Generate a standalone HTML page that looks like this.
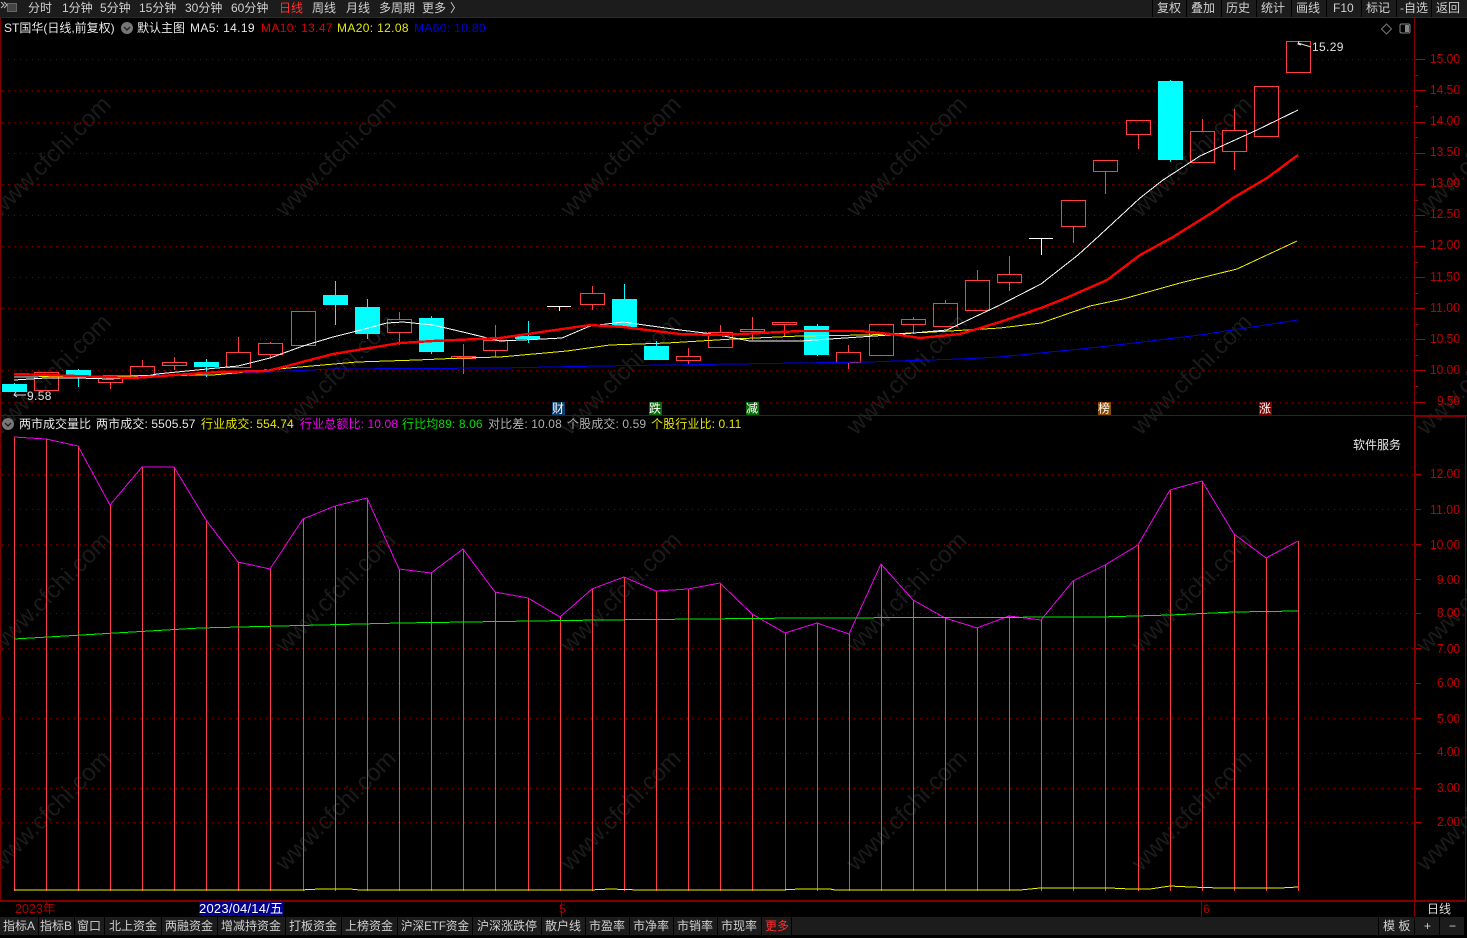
<!DOCTYPE html>
<html><head><meta charset="utf-8"><style>
html,body{margin:0;padding:0;background:#000;overflow:hidden;width:1467px;height:938px}
svg{display:block}
text{font-family:"Liberation Sans","Noto Sans CJK SC",sans-serif;font-size:12px;white-space:pre}
.m text{fill:#d0d0d0}
.ax text{fill:#c00000;font-size:13px}
.wm text{fill:#1b1b1b;font-size:24px}
.ls{letter-spacing:.35px}
.ls2{letter-spacing:.12px}
.r{fill:none;stroke:#ff4040;stroke-width:1;shape-rendering:crispEdges}
.c{fill:#00ffff;shape-rendering:crispEdges}
.w{stroke:#00ffff;stroke-width:1;shape-rendering:crispEdges}
polyline{shape-rendering:crispEdges}
</style></head><body>
<svg width="1467" height="938" viewBox="0 0 1467 938" xmlns="http://www.w3.org/2000/svg">
<rect width="1467" height="938" fill="#000"/>
<!-- watermark -->
<g class="wm">
<text transform="translate(0,218) rotate(-45)">www.cfchi.com</text>
<text transform="translate(285,218) rotate(-45)">www.cfchi.com</text>
<text transform="translate(570,218) rotate(-45)">www.cfchi.com</text>
<text transform="translate(856,218) rotate(-45)">www.cfchi.com</text>
<text transform="translate(1141,218) rotate(-45)">www.cfchi.com</text>
<text transform="translate(1426,218) rotate(-45)">www.cfchi.com</text>
<text transform="translate(0,436) rotate(-45)">www.cfchi.com</text>
<text transform="translate(285,436) rotate(-45)">www.cfchi.com</text>
<text transform="translate(570,436) rotate(-45)">www.cfchi.com</text>
<text transform="translate(856,436) rotate(-45)">www.cfchi.com</text>
<text transform="translate(1141,436) rotate(-45)">www.cfchi.com</text>
<text transform="translate(1426,436) rotate(-45)">www.cfchi.com</text>
<text transform="translate(0,654) rotate(-45)">www.cfchi.com</text>
<text transform="translate(285,654) rotate(-45)">www.cfchi.com</text>
<text transform="translate(570,654) rotate(-45)">www.cfchi.com</text>
<text transform="translate(856,654) rotate(-45)">www.cfchi.com</text>
<text transform="translate(1141,654) rotate(-45)">www.cfchi.com</text>
<text transform="translate(1426,654) rotate(-45)">www.cfchi.com</text>
<text transform="translate(0,872) rotate(-45)">www.cfchi.com</text>
<text transform="translate(285,872) rotate(-45)">www.cfchi.com</text>
<text transform="translate(570,872) rotate(-45)">www.cfchi.com</text>
<text transform="translate(856,872) rotate(-45)">www.cfchi.com</text>
<text transform="translate(1141,872) rotate(-45)">www.cfchi.com</text>
<text transform="translate(1426,872) rotate(-45)">www.cfchi.com</text>
</g>
<!-- grid upper -->
<g stroke="#800000" stroke-width="1" stroke-dasharray="1 5" shape-rendering="crispEdges" fill="none">
<path d="M2 59.5H1415M2 90.5H1415M2 122.5H1415M2 153.5H1415M2 184.5H1415M2 215.5H1415M2 246.5H1415M2 277.5H1415M2 308.5H1415M2 339.5H1415M2 370.5H1415M2 402.5H1415"/>
<path d="M2 474.5H1415M2 509.5H1415M2 544.5H1415M2 579.5H1415M2 613.5H1415M2 648.5H1415M2 683.5H1415M2 718.5H1415M2 753.5H1415M2 788.5H1415M2 822.5H1415"/>
</g>
<!-- top toolbar -->
<rect x="0" y="0" width="1467" height="17" fill="#1c1c1c"/>
<rect x="0" y="17" width="1467" height="1" fill="#2a2a2a"/>
<g fill="#000" shape-rendering="crispEdges">
<rect x="1152" y="0" width="1" height="17"/><rect x="1186" y="0" width="1" height="17"/><rect x="1221" y="0" width="1" height="17"/><rect x="1256" y="0" width="1" height="17"/><rect x="1291" y="0" width="1" height="17"/><rect x="1326" y="0" width="1" height="17"/><rect x="1361" y="0" width="1" height="17"/><rect x="1396" y="0" width="1" height="17"/><rect x="1431" y="0" width="1" height="17"/>
</g>
<rect x="7.5" y="3.5" width="9" height="8" fill="#444" stroke="#666"/>
<path d="M1 2l3 3-3 3M4 2l3 3-3 3" stroke="#bbb" fill="none"/>
<g class="m">
<text x="28" y="12">分时</text><text x="62" y="12">1分钟</text><text x="100" y="12">5分钟</text><text x="139" y="12">15分钟</text><text x="185" y="12">30分钟</text><text x="231" y="12">60分钟</text>
<text x="279" y="12" style="fill:#ff3030">日线</text><text x="312" y="12">周线</text><text x="346" y="12">月线</text><text x="379" y="12">多周期</text><text x="422" y="12">更多</text><text x="450" y="12">〉</text>
<text x="1157" y="12">复权</text><text x="1191" y="12">叠加</text><text x="1226" y="12">历史</text><text x="1261" y="12">统计</text><text x="1296" y="12">画线</text><text x="1333" y="12">F10</text><text x="1366" y="12">标记</text><text x="1400" y="12">-自选</text><text x="1436" y="12">返回</text>
</g>
<!-- info upper -->
<text x="4" y="32" fill="#e8e8e8">ST国华(日线,前复权)</text>
<circle cx="127" cy="28" r="6" fill="#777"/><path d="M124 27l3 3 3-3" stroke="#222" stroke-width="1.4" fill="none"/>
<text x="137" y="32" fill="#e8e8e8">默认主图</text>
<text class="ls" x="190" y="32" fill="#e8e8e8">MA5: 14.19</text>
<text class="ls" x="261" y="32" fill="#e00000">MA10: 13.47</text>
<text class="ls" x="337" y="32" fill="#e8e800">MA20: 12.08</text>
<text class="ls" x="414" y="32" fill="#0000e0">MA60: 10.80</text>
<path d="M1386.5 24l5 5-5 5-5-5z" fill="none" stroke="#777"/>
<rect x="1400" y="24" width="10" height="9" rx="1.5" fill="none" stroke="#888"/><rect x="1405" y="25" width="4" height="7" fill="#888"/>
<!-- candles -->
<g class="r">
<path d="M34.5 372.5h24v18h-24zM98.5 377.5h24v5h-24zM110.5 383v6M130.5 366.5h24v9h-24zM142.5 360v6M162.5 362.5h24v3h-24zM174.5 357v5M174.5 366v4M226.5 352.5h24v15h-24zM238.5 337v15M258.5 343.5h24v11h-24zM270.5 342v1M270.5 355v3M291.5 311.5h24v34h-24zM387.5 319.5h24v13h-24zM399.5 312v7M399.5 333v12M451.5 356.5h24v2h-24zM463.5 344v12M463.5 359v15"/>
<path d="M483.5 340.5h24v10h-24zM495.5 325v15M495.5 351v6M580.5 293.5h24v11h-24zM592.5 286v7M592.5 305v5M676.5 356.5h24v4h-24zM688.5 348v8M688.5 361v3M708.5 332.5h24v15h-24zM720.5 325v7M740.5 329.5h24v2h-24zM752.5 317v12M752.5 332v8M772.5 322.5h24v2h-24zM784.5 325v12M836.5 352.5h24v10h-24zM848.5 345v7M848.5 363v6M869.5 324.5h24v31h-24zM901.5 319.5h24v5h-24zM913.5 317v2M913.5 325v9M933.5 303.5h24v23h-24zM945.5 300v3"/>
<path d="M965.5 280.5h24v30h-24zM977.5 270v10M997.5 274.5h24v8h-24zM1009.5 256v18M1009.5 283v8M1061.5 200.5h24v26h-24zM1073.5 227v16M1093.5 160.5h24v11h-24zM1105.5 172v22M1126.5 120.5h24v14h-24zM1138.5 135v14M1190.5 131.5h24v31h-24zM1202.5 119v12M1222.5 130.5h24v21h-24zM1234.5 109v21M1234.5 152v18M1254.5 86.5h24v50h-24zM1286.5 41.5h24v31h-24z"/>
</g>
<path d="M547 306.5h24M559.5 307v4M1029 238.5h24M1041.5 239v16" stroke="#fff" shape-rendering="crispEdges" fill="none"/>
<g>
<path class="w" d="M14.5 383v2M78.5 369v18M206.5 359v18M335.5 281v44M367.5 299v40M431.5 316v38M528.5 321v22M624.5 284v44M656.5 341v5M817.5 324v32M1170.5 80v82"/>
<rect class="c" x="2" y="384" width="25" height="8"/><rect class="c" x="66" y="370" width="25" height="6"/><rect class="c" x="194" y="362" width="25" height="5"/><rect class="c" x="323" y="295" width="25" height="10"/><rect class="c" x="355" y="307" width="25" height="27"/><rect class="c" x="419" y="318" width="25" height="34"/><rect class="c" x="515" y="336" width="25" height="3"/><rect class="c" x="612" y="299" width="25" height="28"/><rect class="c" x="644" y="346" width="25" height="14"/><rect class="c" x="804" y="326" width="25" height="29"/><rect class="c" x="1158" y="81" width="25" height="79"/>
</g>
<!-- MAs -->
<polyline fill="none" stroke="#0000f0" stroke-width="1" points="14,376 133,376 267,372 333,369 500,368 600,366 733,364 800,363 867,362 960,359 1000,357 1100,347 1200,335 1298,320"/>
<polyline fill="none" stroke="#f0f000" stroke-width="1" points="14,377 213,375 267,370 300,367 357,362 417,360 463,358 500,357 567,351 610,345 667,343 733,339 800,336 867,335 933,332 1000,328 1041,323 1090,306 1123,299 1180,283 1237,269 1297,241"/>
<polyline fill="none" stroke="#ffffff" stroke-width="1" points="14,380 46,378 78,378 110,379 142,377 157,374 207,369 238,366 270,358 303,346 333,337 353,332 387,323 403,322 433,325 467,333 500,341 543,339 562,338 590,326 623,322 680,330 713,334 750,341 800,341 860,337 903,334 947,330 1000,305 1041,284 1078,255 1100,235 1140,198 1163,180 1200,156 1213,150 1257,130 1298,110"/>
<polyline fill="none" stroke="#ff0000" stroke-width="2.4" points="14,374 47,375 133,378 217,372 267,371 283,367 333,354 400,343 433,341 500,338 590,325 623,327 680,334 720,335 760,333 800,331 860,331 900,335 920,338 960,334 1000,322 1041,308 1066,298 1107,280 1140,255 1173,237 1213,212 1233,198 1267,178 1298,155"/>
<!-- low/high annotations -->
<path d="M16 392l-2 3 3 2M14 395h12" stroke="#ddd" fill="none"/>
<text class="ls" x="27" y="400" fill="#e0e0e0">9.58</text>
<path d="M1299 41l-1 3 3 1M1298 43l13 4" stroke="#ddd" fill="none"/>
<text class="ls" x="1312" y="51" fill="#e0e0e0">15.29</text>
<!-- marks -->
<g>
<rect x="552" y="402" width="13" height="13" fill="#0c3d6e"/><text x="552" y="412.5" fill="#fff">财</text>
<rect x="649" y="402" width="13" height="13" fill="#0a6a0a"/><text x="649" y="412.5" fill="#fff">跌</text>
<rect x="746" y="402" width="13" height="13" fill="#0a6a0a"/><text x="746" y="412.5" fill="#fff">减</text>
<rect x="1098" y="402" width="13" height="13" fill="#8a4a00"/><text x="1098" y="412.5" fill="#fff">榜</text>
<rect x="1259" y="402" width="13" height="13" fill="#7a0000"/><text x="1259" y="412.5" fill="#fff">涨</text>
</g>
<!-- lower info -->
<circle cx="8" cy="424" r="6" fill="#777"/><path d="M5 423l3 3 3-3" stroke="#222" stroke-width="1.4" fill="none"/>
<text x="19" y="428" fill="#e8e8e8">两市成交量比</text>
<text class="ls2" x="96" y="428" fill="#e8e8e8">两市成交: 5505.57</text>
<text class="ls2" x="201" y="428" fill="#e8e800">行业成交: 554.74</text>
<text class="ls2" x="300" y="428" fill="#f000f0">行业总额比: 10.08</text>
<text class="ls2" x="402" y="428" fill="#00e000">行比均89: 8.06</text>
<text class="ls2" x="488" y="428" fill="#b0b0b0">对比差: 10.08</text>
<text class="ls2" x="567" y="428" fill="#b0b0b0">个股成交: 0.59</text>
<text class="ls2" x="651" y="428" fill="#e8e800">个股行业比: 0.11</text>
<text x="1353" y="449" fill="#e8e8e8">软件服务</text>
<!-- lower bars -->
<path fill="none" stroke="#ff4040" stroke-width="1" shape-rendering="crispEdges" d="M14.5 437V891M46.5 439V891M78.5 446V891M110.5 505V891M142.5 467V891M174.5 467V891M206.5 520V891M238.5 562V891M270.5 569V891M303.5 519V891M335.5 506V891M367.5 498V891M399.5 569V891M431.5 573V891M463.5 549V891M495.5 592V891M528.5 598V891M560.5 617V891M592.5 589V891M624.5 577V891M656.5 591V891M688.5 589V891M720.5 583V891M752.5 614V891M785.5 633V891M817.5 623V891M849.5 634V891M881.5 564V891M913.5 600V891M945.5 618V891M977.5 628V891M1009.5 616V891M1041.5 620V891M1073.5 581V891M1105.5 565V891M1138.5 545V891M1170.5 490V891M1202.5 481V891M1234.5 534V891M1266.5 558V891M1298.5 541V891"/>
<polyline fill="none" stroke="#f000f0" stroke-width="1" points="14,437 46,439 78,446 110,505 142,467 174,467 206,520 238,562 270,569 303,519 335,506 367,498 399,569 431,573 463,549 495,592 528,598 560,617 592,589 624,577 656,591 688,589 720,583 752,614 785,633 817,623 849,634 881,564 913,600 945,618 977,628 1009,616 1041,620 1073,581 1105,565 1138,545 1170,490 1202,481 1234,534 1266,558 1298,541"/>
<polyline fill="none" stroke="#00f000" stroke-width="1" points="14,639 200,628 400,623 600,620 800,618 1100,617 1170,615 1234,612 1298,611"/>
<polyline fill="none" stroke="#f0f000" stroke-width="1" points="14,890 300,890 320,889 350,889 360,890 590,890 610,889 640,890 780,890 800,889 830,889 835,890 1020,890 1040,888 1110,888 1130,889 1150,889 1170,886 1190,887 1220,888 1280,888 1298,887"/>
<!-- frame -->
<g fill="#800000" shape-rendering="crispEdges">
<rect x="0" y="18" width="1" height="883"/>
<rect x="0" y="415" width="1467" height="1"/>
<rect x="0" y="900" width="1415" height="2"/>
<rect x="1414" y="18" width="1" height="899"/>
<rect x="1415" y="416" width="1" height="485"/>
<rect x="1415" y="900" width="51" height="2"/>
<rect x="1465" y="416" width="1" height="485"/>
<rect x="1415" y="415" width="51" height="2"/>
<rect x="561" y="902" width="1" height="15"/>
<rect x="1201" y="902" width="1" height="15"/>
</g>
<!-- axis ticks -->
<path stroke="#b00000" fill="none" shape-rendering="crispEdges" d="M1415 59.5h10M1415 75.5h3M1415 90.5h10M1415 106.5h3M1415 122.5h10M1415 137.5h3M1415 153.5h10M1415 169.5h3M1415 184.5h10M1415 200.5h3M1415 215.5h10M1415 231.5h3M1415 246.5h10M1415 262.5h3M1415 277.5h10M1415 293.5h3M1415 308.5h10M1415 324.5h3M1415 339.5h10M1415 355.5h3M1415 370.5h10M1415 386.5h3M1415 402.5h10M1416 474.5h5M1416 509.5h5M1416 544.5h5M1416 579.5h5M1416 613.5h5M1416 648.5h5M1416 683.5h5M1416 718.5h5M1416 753.5h5M1416 788.5h5M1416 822.5h5"/>
<g class="ax">
<text x="1430" y="63" textLength="30" lengthAdjust="spacingAndGlyphs">15.00</text><text x="1430" y="94" textLength="30" lengthAdjust="spacingAndGlyphs">14.50</text><text x="1430" y="125" textLength="30" lengthAdjust="spacingAndGlyphs">14.00</text><text x="1430" y="156" textLength="30" lengthAdjust="spacingAndGlyphs">13.50</text><text x="1430" y="187" textLength="30" lengthAdjust="spacingAndGlyphs">13.00</text><text x="1430" y="218" textLength="30" lengthAdjust="spacingAndGlyphs">12.50</text><text x="1430" y="249" textLength="30" lengthAdjust="spacingAndGlyphs">12.00</text><text x="1430" y="281" textLength="30" lengthAdjust="spacingAndGlyphs">11.50</text><text x="1430" y="312" textLength="30" lengthAdjust="spacingAndGlyphs">11.00</text><text x="1430" y="343" textLength="30" lengthAdjust="spacingAndGlyphs">10.50</text><text x="1430" y="374" textLength="30" lengthAdjust="spacingAndGlyphs">10.00</text><text x="1437" y="405" textLength="23" lengthAdjust="spacingAndGlyphs">9.50</text>
<text x="1430" y="478" textLength="30" lengthAdjust="spacingAndGlyphs">12.00</text><text x="1430" y="514" textLength="30" lengthAdjust="spacingAndGlyphs">11.00</text><text x="1430" y="549" textLength="30" lengthAdjust="spacingAndGlyphs">10.00</text><text x="1437" y="584" textLength="23" lengthAdjust="spacingAndGlyphs">9.00</text><text x="1437" y="617" textLength="23" lengthAdjust="spacingAndGlyphs">8.00</text><text x="1437" y="653" textLength="23" lengthAdjust="spacingAndGlyphs">7.00</text><text x="1437" y="687" textLength="23" lengthAdjust="spacingAndGlyphs">6.00</text><text x="1437" y="723" textLength="23" lengthAdjust="spacingAndGlyphs">5.00</text><text x="1437" y="756" textLength="23" lengthAdjust="spacingAndGlyphs">4.00</text><text x="1437" y="792" textLength="23" lengthAdjust="spacingAndGlyphs">3.00</text><text x="1437" y="826" textLength="23" lengthAdjust="spacingAndGlyphs">2.00</text>
</g>
<!-- date row -->
<text x="15" y="913" fill="#b00000" style="font-size:12.5px">2023年</text>
<rect x="199" y="902" width="84" height="14" fill="#00008b"/>
<text x="199" y="913" fill="#fff" style="font-size:13px" textLength="84" lengthAdjust="spacing">2023/04/14/五</text>
<text x="559" y="913" fill="#b00000">5</text>
<text x="1203" y="913" fill="#b00000">6</text>
<text x="1427" y="913" fill="#dcdcdc">日线</text>
<!-- bottom toolbar -->
<rect x="0" y="917" width="1467" height="19" fill="#1c1c1c"/>
<g fill="#000" shape-rendering="crispEdges">
<rect x="38" y="917" width="1" height="19"/><rect x="74" y="917" width="1" height="19"/><rect x="104" y="917" width="1" height="19"/><rect x="161" y="917" width="1" height="19"/><rect x="217" y="917" width="1" height="19"/><rect x="285" y="917" width="1" height="19"/><rect x="341" y="917" width="1" height="19"/><rect x="397" y="917" width="1" height="19"/><rect x="472" y="917" width="1" height="19"/><rect x="541" y="917" width="1" height="19"/><rect x="585" y="917" width="1" height="19"/><rect x="629" y="917" width="1" height="19"/><rect x="673" y="917" width="1" height="19"/><rect x="717" y="917" width="1" height="19"/><rect x="761" y="917" width="1" height="19"/><rect x="791" y="917" width="1" height="19"/>
<rect x="1378" y="917" width="1" height="19"/><rect x="1414" y="917" width="1" height="19"/><rect x="1439" y="917" width="1" height="19"/><rect x="1464" y="917" width="3" height="19"/>
<rect x="0" y="935" width="1467" height="3"/>
</g>
<g class="m">
<text x="3" y="930">指标A</text><text x="40" y="930">指标B</text><text x="77" y="930">窗口</text><text x="109" y="930">北上资金</text><text x="165" y="930">两融资金</text><text x="221" y="930">增减持资金</text><text x="289" y="930">打板资金</text><text x="345" y="930">上榜资金</text><text x="401" y="930" textLength="68" lengthAdjust="spacingAndGlyphs">沪深ETF资金</text><text x="477" y="930">沪深涨跌停</text><text x="545" y="930">散户线</text><text x="589" y="930">市盈率</text><text x="633" y="930">市净率</text><text x="677" y="930">市销率</text><text x="721" y="930">市现率</text>
<text x="765" y="930" style="fill:#ff3030">更多</text>
<text x="1383" y="930">模 板</text><text x="1424" y="930">+</text><text x="1449" y="930">−</text>
</g>
</svg>
</body></html>
